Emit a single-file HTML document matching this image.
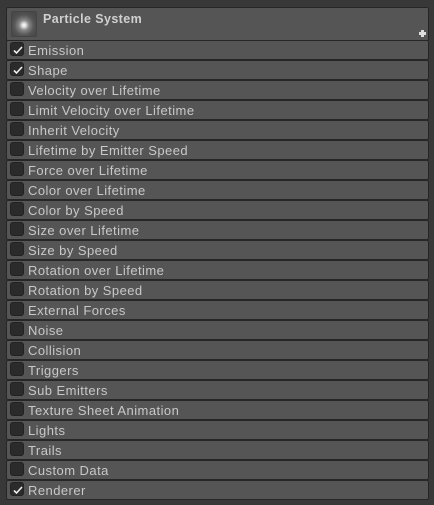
<!DOCTYPE html><html><head><style>
body{margin:0;width:434px;height:505px;background:#383838;font-family:"Liberation Sans",sans-serif;overflow:hidden;position:relative}
.h{position:absolute;left:6px;top:7px;width:421px;height:32px;background:#555;border:1px solid #262626;border-radius:2px}
.ic{position:absolute;left:4px;top:3px;width:24px;height:24px;background:radial-gradient(circle at 50% 55%,#fff 0,#ddd 2px,#888 5px,#555 10px,#4a4a4a 14px);border-radius:2px;border:1px solid #444}
.t{position:absolute;left:36px;top:4px;font-size:12.5px;font-weight:bold;color:#d0d0d0;letter-spacing:0.4px}
.plus{position:absolute;right:2px;bottom:3px;width:7px;height:7px}
.plus:before,.plus:after{content:"";position:absolute;background:#ddd}
.plus:before{left:2px;top:0;width:3px;height:7px}.plus:after{left:0;top:2px;width:7px;height:3px}
.r{position:absolute;left:6px;width:421px;height:18px;background:#555;border:1px solid #262626;border-radius:2px}
.cb{position:absolute;left:3px;top:1px;width:14px;height:14px;background:#2b2b2b;border:1px solid #222;border-radius:3px;box-sizing:border-box}
.cb svg{position:absolute;left:1px;top:1px}
.l{position:absolute;left:21px;top:2px;font-size:13px;color:#c8c8c8;letter-spacing:0.45px}
</style></head><body>
<div class="h"><div class="ic"></div><div class="t">Particle System</div><div class="plus"></div></div>
<div class="r" style="top:40px"><div class="cb"><svg width="12" height="12"><path d="M2 6.5L4.5 9L10 3" stroke="#eee" stroke-width="1.6" fill="none"/></svg></div><div class="l">Emission</div></div>
<div class="r" style="top:60px"><div class="cb"><svg width="12" height="12"><path d="M2 6.5L4.5 9L10 3" stroke="#eee" stroke-width="1.6" fill="none"/></svg></div><div class="l">Shape</div></div>
<div class="r" style="top:80px"><div class="cb"></div><div class="l">Velocity over Lifetime</div></div>
<div class="r" style="top:100px"><div class="cb"></div><div class="l">Limit Velocity over Lifetime</div></div>
<div class="r" style="top:120px"><div class="cb"></div><div class="l">Inherit Velocity</div></div>
<div class="r" style="top:140px"><div class="cb"></div><div class="l">Lifetime by Emitter Speed</div></div>
<div class="r" style="top:160px"><div class="cb"></div><div class="l">Force over Lifetime</div></div>
<div class="r" style="top:180px"><div class="cb"></div><div class="l">Color over Lifetime</div></div>
<div class="r" style="top:200px"><div class="cb"></div><div class="l">Color by Speed</div></div>
<div class="r" style="top:220px"><div class="cb"></div><div class="l">Size over Lifetime</div></div>
<div class="r" style="top:240px"><div class="cb"></div><div class="l">Size by Speed</div></div>
<div class="r" style="top:260px"><div class="cb"></div><div class="l">Rotation over Lifetime</div></div>
<div class="r" style="top:280px"><div class="cb"></div><div class="l">Rotation by Speed</div></div>
<div class="r" style="top:300px"><div class="cb"></div><div class="l">External Forces</div></div>
<div class="r" style="top:320px"><div class="cb"></div><div class="l">Noise</div></div>
<div class="r" style="top:340px"><div class="cb"></div><div class="l">Collision</div></div>
<div class="r" style="top:360px"><div class="cb"></div><div class="l">Triggers</div></div>
<div class="r" style="top:380px"><div class="cb"></div><div class="l">Sub Emitters</div></div>
<div class="r" style="top:400px"><div class="cb"></div><div class="l">Texture Sheet Animation</div></div>
<div class="r" style="top:420px"><div class="cb"></div><div class="l">Lights</div></div>
<div class="r" style="top:440px"><div class="cb"></div><div class="l">Trails</div></div>
<div class="r" style="top:460px"><div class="cb"></div><div class="l">Custom Data</div></div>
<div class="r" style="top:480px"><div class="cb"><svg width="12" height="12"><path d="M2 6.5L4.5 9L10 3" stroke="#eee" stroke-width="1.6" fill="none"/></svg></div><div class="l">Renderer</div></div>
</body></html>
